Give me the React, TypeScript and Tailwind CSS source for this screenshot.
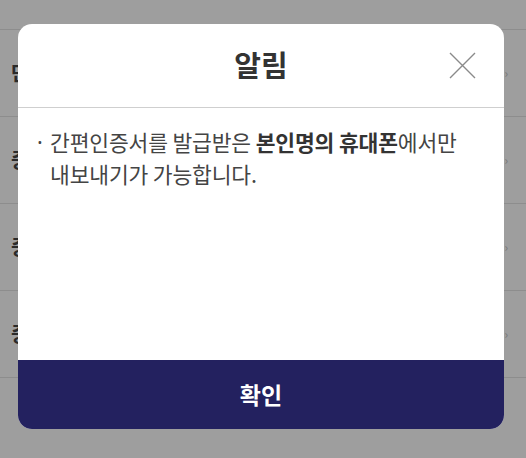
import React from "react";

const rows = ["단", "증", "증", "증"];

export default function App() {
  return (
    <div
      className="relative w-[526px] h-[458px] overflow-hidden bg-[#9e9e9e]"
      style={{ fontFamily: '"Noto Sans CJK KR", "Noto Sans", sans-serif' }}
    >
      <div className="pt-[29px]">
        {rows.map((r, i) => (
          <div
            key={i}
            className="flex h-[87px] items-center justify-between border-t border-[#8d8d8d] pl-[11px] pr-[18px]"
          >
            <span className="text-[20px] font-bold text-[#2a2a2a]">{r}</span>
            <span className="text-[12px] text-[#777]">›</span>
          </div>
        ))}
        <div className="border-t border-[#8d8d8d]" />
      </div>

      <div className="absolute left-[18px] top-[24px] flex h-[405px] w-[486px] flex-col overflow-hidden rounded-[14px] bg-white">
        <div className="relative flex h-[84px] shrink-0 items-center justify-center border-b border-[#cfcfcf]">
          <span className="text-[29px] font-bold leading-none text-[#333] pb-[3px]">알림</span>
          <button className="absolute right-[28px] top-[28px] h-[27px] w-[27px]">
            <svg viewBox="0 0 27 27" width="27" height="27">
              <path d="M1 1L26 26M26 1L1 26" stroke="#8a8a8a" strokeWidth="1.4" fill="none" />
            </svg>
          </button>
        </div>
        <div className="flex-1 pl-[19px] pt-[18px]">
          <div className="flex text-[21.5px] leading-[31.5px] text-[#444]">
            <span
              className="mr-[6px] w-[7px] shrink-0 overflow-hidden"
              style={{ fontFamily: '"Noto Sans", sans-serif' }}
            >
              ·
            </span>
            <div className="whitespace-nowrap tracking-[-0.15px]">
              <div>
                간편인증서를 발급받은 <b className="font-bold text-[#333]">본인명의 휴대폰</b>에서만
              </div>
              <div>내보내기가 가능합니다.</div>
            </div>
          </div>
        </div>
        <button className="flex h-[69px] shrink-0 items-center justify-center bg-[#23215f] text-[23px] font-bold text-white">
          확인
        </button>
      </div>
    </div>
  );
}
